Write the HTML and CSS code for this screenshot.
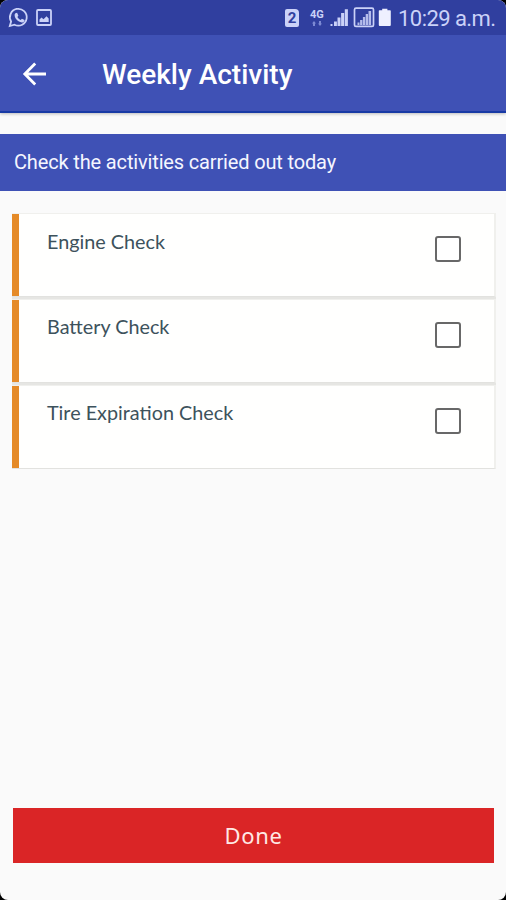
FILE: index.html
```html
<!DOCTYPE html>
<html lang="en">
<head>
<meta charset="utf-8">
<title>Weekly Activity</title>
<link rel="stylesheet" href="styles.css">
</head>
<body>
<div class="screen">
  <header>
    <div class="status">
      <svg class="notifications" width="54" height="34" viewBox="0 0 54 34" fill="none" stroke="#cbd2f8">
        <path d="M9.8 26l1.3-4.5a8.4 8.4 0 1 1 3.4 3.2z" stroke-width="1.8"/>
        <path d="M15.4 13.2l1.7-.4 1.3 3-1 1.2c.8 1.5 1.8 2.4 3.3 3.1l1.2-1.3 2.7 1.3c-.1 1.9-1.3 2.6-2.8 2.4-3.9-.6-7.2-4.1-7.2-7.4 0-.9.3-1.5.8-1.9z" fill="#cbd2f8" stroke="none"/>
        <rect x="37" y="10" width="14" height="15" rx="1" stroke-width="1.8"/>
        <path d="M39.5 22v-2.5l2-2 2 1.7 3-3 2.2 2.3V22z" fill="#cbd2f8" stroke="none"/>
      </svg>
      <div class="indicators">
        <span class="sim">2</span>
        <span class="network">4G<svg width="10" height="5" viewBox="0 0 10 5" fill="#7c89d3"><path d="M0 2.5L2 0l2 2.5H3V5H1V2.5zM6 2.5L8 5l2-2.5H9V0H7v2.5z"/></svg></span>
        <svg class="signals" width="62" height="24" viewBox="330 6 62 24" fill="#cbd2f8">
          <path d="M330.5 24h2v2h-2zM334 21.5h2.9V26H334zM337.5 17.5h3V26h-3zM341.1 13h3.1v13h-3.1zM344.8 9.2h3.1V26h-3.1z"/>
          <rect x="354.5" y="8.2" width="19" height="18.2" rx="1.5" fill="none" stroke="#cbd2f8" stroke-width="1.7"/>
          <path d="M357.5 22.5h2V25h-2zM360.1 20h2.3v5h-2.3zM362.9 17h2.3v8h-2.3zM365.7 14h2.3v11h-2.3zM368.5 11h2.6v14h-2.6z" opacity=".85"/>
          <path d="M379.5 10.2h2.7V8.8h5.2v1.4h2.7q.7 0 .7.8v14q0 1-1 1h-10q-1 0-1-1V11q0-.8.7-.8z" fill="#eef0ff"/>
        </svg>
        <span class="clock">10:29 a.m.</span>
      </div>
    </div>
    <div class="appbar">
      <svg class="back" width="26" height="26" viewBox="0 0 26 26" fill="none" stroke="#fff" stroke-width="2.8"><path d="M24 13H3M13.2 2.5L2.8 13l10.4 10.5"/></svg>
      <h1>Weekly Activity</h1>
    </div>
  </header>
  <p class="banner">Check the activities carried out today</p>
  <main class="list">
    <label class="item"><span>Engine Check</span><input type="checkbox"></label>
    <label class="item"><span>Battery Check</span><input type="checkbox"></label>
    <label class="item"><span>Tire Expiration Check</span><input type="checkbox"></label>
  </main>
  <button class="done">Done</button>
</div>
</body>
</html>
```
FILE: styles.css
```css
* { box-sizing: border-box; }
body { margin: 0; background: #000; font-family: Roboto, sans-serif; }
.screen {
  width: 506px; height: 900px; background: #fafafa;
  border-radius: 8px; overflow: hidden;
  display: flex; flex-direction: column;
}
header { height: 113px; box-shadow: 0 1px 3px rgba(0,0,0,.25); }
.status {
  height: 35px; background: #303f9f; color: #cbd2f8;
  display: flex; justify-content: space-between; padding-right: 11px;
}
.indicators { display: flex; align-items: center; }
.sim {
  width: 14px; height: 18px; margin-right: 11px; border-radius: 2px 4px 2px 2px;
  background: #cbd2f8; color: #303f9f; font-weight: 700; font-size: 15px;
  line-height: 18px; text-align: center;
}
.network {
  width: 20px; font-size: 11px; line-height: 11px; font-weight: 700;
  display: flex; flex-direction: column; align-items: flex-start; gap: 1px;
}
.network svg { margin-left: 2px; }
.clock { font-size: 22px; letter-spacing: -.55px; margin-left: 6px; width: 97px; white-space: nowrap; line-height: 37px; padding-top: 1px; }
.appbar {
  height: 78px; background: #3f51b5; border-bottom: 2px solid #183aa5;
  display: flex; align-items: center; padding: 1px 0 0 22px; color: #fff;
}
h1 { margin: 3px 0 0 54px; font-weight: 500; font-size: 28px; line-height: 32px; white-space: nowrap; }
.banner {
  height: 57px; margin: 21px 0 0; padding-left: 14px; line-height: 57px;
  background: #3f51b5; color: #f5f6ff; font-size: 20px; letter-spacing: -.15px; white-space: nowrap;
}
.list { margin: 22px 10px 0 12px; display: flex; flex-direction: column; gap: 2px; background: #e6e6e3; }
.item {
  height: 84px; border: solid #f0f0ed; border-width: 1px 2px 1px 0; border-bottom-color: #e2e2df;
  background: linear-gradient(to right, #e58a27 6.5px, #fffffe 7px);
  padding: 15px 33px 0 35px; display: flex; justify-content: space-between;
  font-family: Lato, sans-serif; font-size: 19.8px; line-height: 24px; color: #3d525c;
}
.item:nth-child(n+2) { padding-top: 14px; }
input {
  appearance: none; width: 26px; height: 26px; margin: 7px 0 0;
  border: 2.5px solid #686868; border-radius: 3px; background: #fff;
}
.item:nth-child(n+2) input { margin-top: 8px; }
.done {
  margin: auto 12px 37px 13px; height: 55px; border: 0; padding: 0 0 1px;
  background: #da2526; color: #ffe9e5; font: 22px "Noto Sans", sans-serif; letter-spacing: .7px;
}
```
